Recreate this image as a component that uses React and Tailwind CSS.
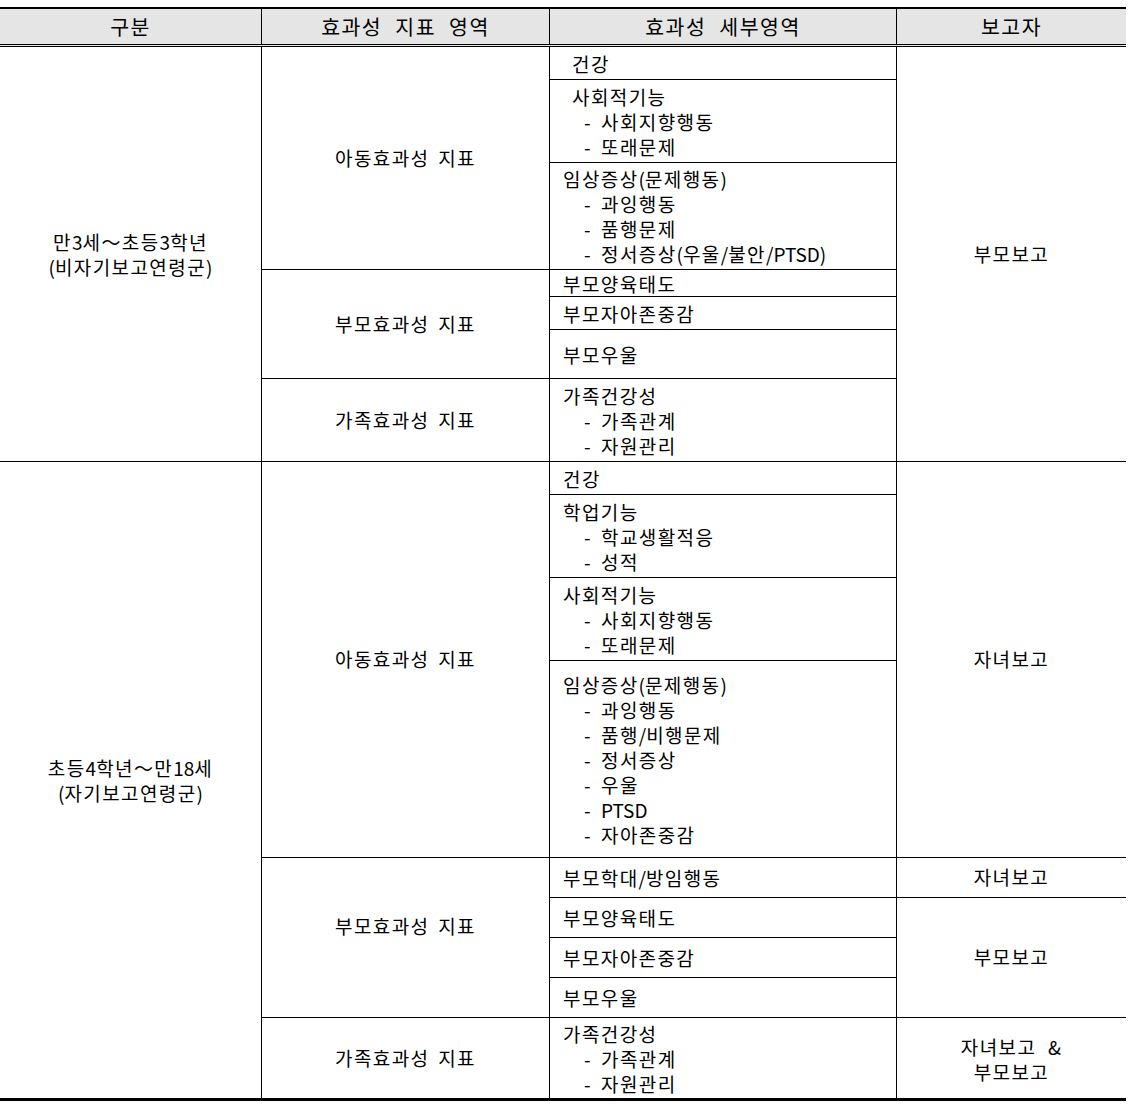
import React from 'react';

const font = "font-['Noto_Sans_CJK_KR','Noto_Sans',sans-serif]";

// 한글에만 자간을 주고 영문/숫자/기호는 기본 자간으로
const T = ({ s }) =>
  s.split(/([\x21-\x7e]+)/).map((part, i) =>
    /^[\x21-\x7e]+$/.test(part) ? (
      <span key={i} className="tracking-normal">{part}</span>
    ) : (
      part
    )
  );

const Cell = ({ className = '', children }) => (
  <div className={`flex items-center border-black ${className}`}>{children}</div>
);

// 세부영역 셀: 제목 + 하위항목 목록
const Detail = ({ className = '', title, items = [], wide }) => (
  <Cell className={`col-start-3 border-r ${className}`}>
    <div className="flex flex-col leading-[25px]">
      <span className={wide ? 'pl-[22px]' : 'pl-[13px]'}><T s={title} /></span>
      {items.map((it) => (
        <span key={it} className="flex pl-[34px]">
          <span className="w-[17px]">-</span>
          <span><T s={it} /></span>
        </span>
      ))}
    </div>
  </Cell>
);

const Group = ({ className = '', children }) => (
  <Cell className={`col-start-2 justify-center border-r [word-spacing:3px] ${className}`}>{children}</Cell>
);

const Reporter = ({ className = '', children }) => (
  <Cell className={`col-start-4 justify-center text-center ${className}`}>{children}</Cell>
);

export default function App() {
  return (
    <div className={`bg-white min-h-[1104px] pt-[7px] text-black text-[19px] tracking-[1.4px] ${font}`}>
      <div className="w-[1126px] border-t-2 border-b-[3px] border-black">
        {/* 헤더 */}
        <div className="grid grid-cols-[262px_288px_347px_229px] h-[38px] bg-[#e5e5e5] border-b-[3px] border-double border-black text-[20.5px] tracking-[1.5px]">
          <Cell className="justify-center border-r">구분</Cell>
          <Cell className="justify-center border-r [word-spacing:7px]">효과성 지표 영역</Cell>
          <Cell className="justify-center border-r [word-spacing:7px]">효과성 세부영역</Cell>
          <Cell className="justify-center">보고자</Cell>
        </div>

        {/* 만3세~초등3학년 */}
        <div className="grid grid-cols-[262px_288px_347px_229px] grid-rows-[33px_83px_107px_27px_33px_49px_83px]">
          <Cell className="col-start-1 row-span-7 justify-center text-center border-r border-b leading-[25px]">
            <div>
              <div><T s="만3세～초등3학년" /></div>
              <div><T s="(비자기보고연령군)" /></div>
            </div>
          </Cell>
          <Group className="row-span-3 border-b">아동효과성 지표</Group>
          <Detail className="border-b" title="건강" wide />
          <Reporter className="row-span-7 border-b">부모보고</Reporter>
          <Detail className="border-b" title="사회적기능" items={['사회지향행동', '또래문제']} wide />
          <Detail className="border-b" title="임상증상(문제행동)" items={['과잉행동', '품행문제', '정서증상(우울/불안/PTSD)']} />
          <Group className="row-span-3 border-b">부모효과성 지표</Group>
          <Detail className="border-b" title="부모양육태도" />
          <Detail className="border-b" title="부모자아존중감" />
          <Detail className="border-b" title="부모우울" />
          <Group className="border-b">가족효과성 지표</Group>
          <Detail className="border-b" title="가족건강성" items={['가족관계', '자원관리']} />
        </div>

        {/* 초등4학년~만18세 */}
        <div className="grid grid-cols-[262px_288px_347px_229px] grid-rows-[33px_83px_83px_197px_40px_40px_40px_40px_80px]">
          <Cell className="col-start-1 row-span-9 justify-center text-center border-r leading-[25px]">
            <div>
              <div><T s="초등4학년～만18세" /></div>
              <div><T s="(자기보고연령군)" /></div>
            </div>
          </Cell>
          <Group className="row-span-4 border-b">아동효과성 지표</Group>
          <Detail className="border-b" title="건강" />
          <Reporter className="row-span-4 border-b">자녀보고</Reporter>
          <Detail className="border-b" title="학업기능" items={['학교생활적응', '성적']} />
          <Detail className="border-b" title="사회적기능" items={['사회지향행동', '또래문제']} />
          <Detail
            className="border-b"
            title="임상증상(문제행동)"
            items={['과잉행동', '품행/비행문제', '정서증상', '우울', 'PTSD', '자아존중감']}
          />
          <Group className="row-span-4 border-b pb-[22px]">부모효과성 지표</Group>
          <Detail className="border-b" title="부모학대/방임행동" />
          <Reporter className="border-b">자녀보고</Reporter>
          <Detail className="border-b" title="부모양육태도" />
          <Reporter className="row-span-3 border-b">부모보고</Reporter>
          <Detail className="border-b" title="부모자아존중감" />
          <Detail className="border-b" title="부모우울" />
          <Group>가족효과성 지표</Group>
          <Detail title="가족건강성" items={['가족관계', '자원관리']} />
          <Reporter className="leading-[25px] pt-[2px]">
            <div>
              <div className="[word-spacing:6px]">자녀보고 &amp;</div>
              <div>부모보고</div>
            </div>
          </Reporter>
        </div>
      </div>
    </div>
  );
}
